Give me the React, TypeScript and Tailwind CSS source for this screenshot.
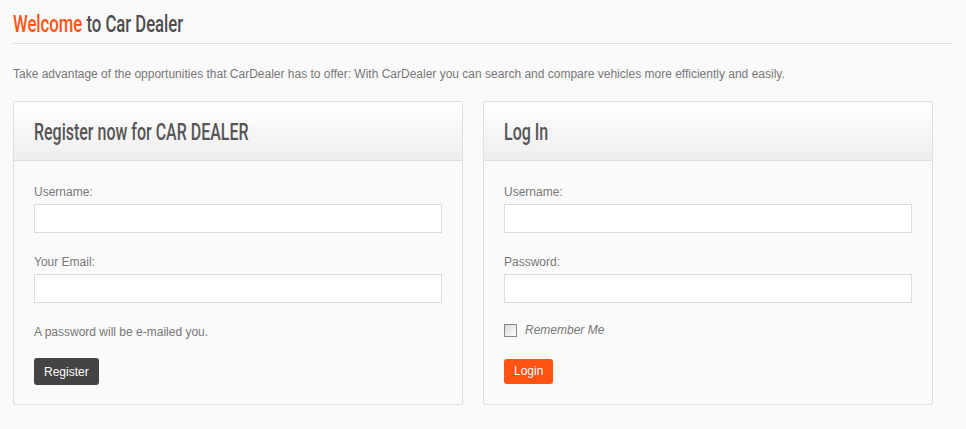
import React from "react";

const condensed = { fontFamily: 'Roboto, "DejaVu Sans", sans-serif' };

function Label({ children }: { children: React.ReactNode }) {
  return <div className="text-[12px] leading-[14px] text-[#777]">{children}</div>;
}

function Field({ label }: { label: string }) {
  return (
    <div className="flex flex-col gap-[5px]">
      <Label>{label}</Label>
      <input className="h-[29px] w-full border border-[#dcdcdc] bg-white outline-none" />
    </div>
  );
}

function Panel({ title, children }: { title: string; children: React.ReactNode }) {
  return (
    <div className="flex flex-col rounded-[2px] border border-[#dedede] bg-[#fafafa]">
      <div className="flex h-[59px] items-center border-b border-[#dedede] bg-gradient-to-b from-white to-[#eeeeee] px-[20px] pt-[3px]">
        <h2 className="whitespace-nowrap text-[23px] font-medium leading-[26px] text-[#555]" style={condensed}>
          <span className="inline-block origin-left scale-x-[0.695]">{title}</span>
        </h2>
      </div>
      <div className="flex flex-col px-[20px] pt-[24px] pb-[19px]">{children}</div>
    </div>
  );
}

export default function App() {
  return (
    <div className="min-h-[429px] w-[966px] bg-[#fafafa] px-[13px] pt-[11px]" style={{ fontFamily: '"Liberation Sans", Arial, sans-serif' }}>
      <h1 className="w-[940px] whitespace-nowrap border-b border-[#dddddd] pb-[5px] text-[24px] font-medium leading-[27px] text-[#4d4d4d]" style={condensed}>
        <span className="inline-block origin-left scale-x-[0.695]">
          <span className="text-[#ff5213]">Welcome</span> to Car Dealer
        </span>
      </h1>
      <p className="mt-[23px] text-[12px] leading-[14px] text-[#777]">
        Take advantage of the opportunities that CarDealer has to offer: With CarDealer you can search and compare vehicles more efficiently and easily.
      </p>
      <div className="mt-[20px] grid w-[920px] grid-cols-2 gap-[20px]">
        <Panel title="Register now for CAR DEALER">
          <Field label="Username:" />
          <div className="mt-[22px]"><Field label="Your Email:" /></div>
          <div className="mt-[22px]"><Label>A password will be e-mailed you.</Label></div>
          <div className="mt-[19px]">
            <button className="h-[27px] rounded-[3px] bg-[#444] px-[10px] text-[12px] text-white">Register</button>
          </div>
        </Panel>
        <Panel title="Log In">
          <Field label="Username:" />
          <div className="mt-[22px]"><Field label="Password:" /></div>
          <div className="mt-[20px] flex items-center gap-[8px]">
            <span className="inline-block h-[13px] w-[13px] border border-[#888] bg-gradient-to-br from-[#d8d8d8] to-white" />
            <span className="text-[12px] italic leading-[14px] text-[#777]">Remember Me</span>
          </div>
          <div className="mt-[21px]">
            <button className="h-[25px] rounded-[3px] bg-[#ff5213] px-[10px] text-[12px] text-white">Login</button>
          </div>
        </Panel>
      </div>
    </div>
  );
}
